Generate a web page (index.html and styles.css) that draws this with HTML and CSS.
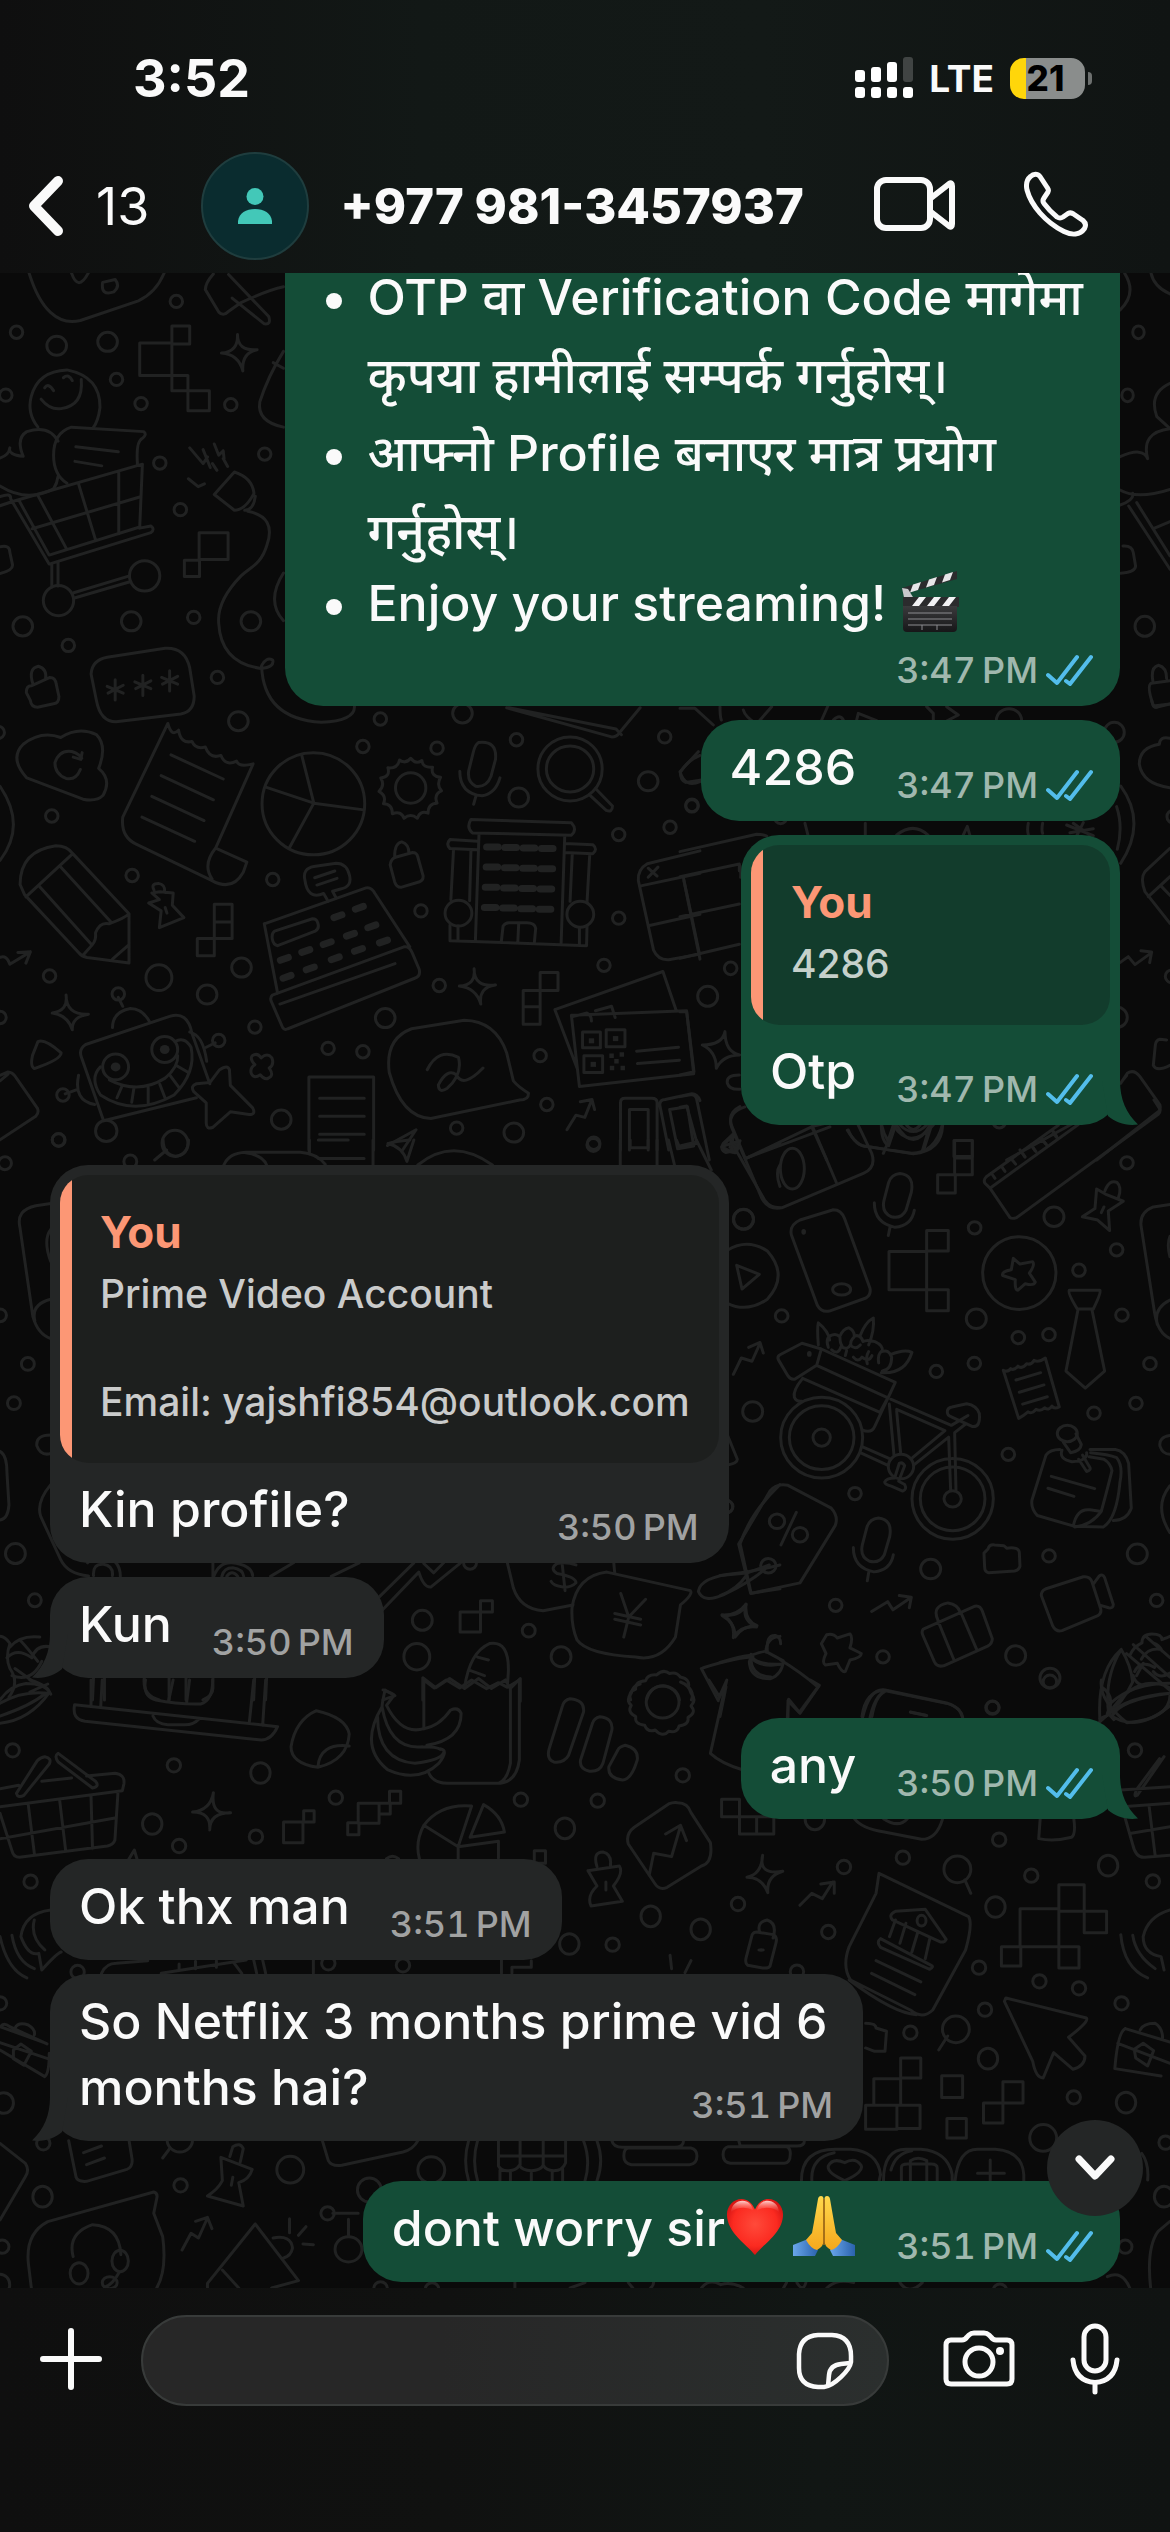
FILE: index.html
```html
<!DOCTYPE html>
<html lang="en">
<head>
<meta charset="utf-8">
<meta name="viewport" content="width=device-width, initial-scale=1">
<title>+977 981-3457937</title>
<link rel="stylesheet" href="styles.css">
</head>
<body>
<svg class="defs" aria-hidden="true">
  <symbol id="ticks" viewBox="0 0 48 32"><path d="M2 21l9 8L31 3M20 27l4 3L45 3" fill="none" stroke="#53bdeb" stroke-width="4" stroke-linecap="round" stroke-linejoin="round"/></symbol>
  <symbol id="tail" viewBox="0 0 36 44"><path d="M18 0C18 18 24 32 36 43.500C24 45 14 42 6 35L0 0z" fill="currentColor"/></symbol>
</svg>

<header class="top">
  <div class="status">
    <span class="clock">3:52</span>
    <div class="status-right">
      <svg class="signal" viewBox="0 0 58 42" aria-hidden="true">
        <g fill="#fff"><rect y="13" width="10" height="12" rx="3"/><rect x="16" y="10" width="10" height="15" rx="3"/><rect x="32" y="5" width="10" height="20" rx="3"/><rect y="30" width="10" height="11" rx="3"/><rect x="16" y="30" width="10" height="11" rx="3"/><rect x="32" y="30" width="10" height="11" rx="3"/><rect x="48" y="30" width="10" height="11" rx="3"/></g>
        <rect x="48" width="10" height="25" rx="3" fill="#404443"/>
      </svg>
      <span class="network">LTE</span>
      <span class="battery"><span class="battery-level">21</span></span>
    </div>
  </div>
  <nav class="bar">
    <button class="back" type="button" aria-label="Back">
      <svg width="36" height="62" viewBox="0 0 36 62" aria-hidden="true"><path d="M30 6L6 31l24 25" fill="none" stroke="#fafafa" stroke-width="10" stroke-linecap="round" stroke-linejoin="round"/></svg>
      <span>13</span>
    </button>
    <span class="avatar"><svg width="34" height="36" viewBox="0 0 34 36" aria-hidden="true" fill="#43c8b8"><circle cx="17" cy="8.500" r="8.500"/><path d="M0 36v-3C1 25 8 21 17 21s16 4 17 12v3z"/></svg></span>
    <h1 class="name">+977 981-3457937</h1>
    <button class="icon" type="button" aria-label="Video call">
      <svg width="82" height="56" viewBox="0 0 82 56" aria-hidden="true" fill="none" stroke="#fafafa" stroke-width="6" stroke-linejoin="round"><rect x="3" y="4" width="53" height="48" rx="9"/><path d="M57 22L75 8q3-2 3 2v38q0 4-3 2L57 36"/></svg>
    </button>
    <button class="icon" type="button" aria-label="Voice call">
      <svg width="66" height="66" viewBox="0 0 66 66" aria-hidden="true" fill="none" stroke="#fafafa" stroke-width="5" stroke-linejoin="round"><path d="M7.500 5.500C10.500 2.500 14.500 2.500 17 5.500L24.500 17q1.500 2 .5 4l-4 6q-2 3 0 5.500C25.500 38.500 29 42 34 46q3 2 6 0l5-3.500q3-1.500 5.500.5l9.500 6.500q4 3.500 1.500 8C57 64 49 64.500 41 60.500C22 51 8 34 4 19Q2 10 7.500 5.500z"/></svg>
    </button>
  </nav>
</header>

<main class="chat">
  <svg class="wallpaper" viewBox="0 273 1170 2015" preserveAspectRatio="xMidYMin slice" aria-hidden="true">
    <g class="wa" transform="translate(0 270) scale(.4464 .5612)">
      <path d="M65 5C90 70 130 100 180 90L310 55Q350 40 368 5M160 5q15 35 38 0M230 22q-5 25 25 17q15-10 3-22z"/>
      <path d="M460 35L490 75q10 8 20 0l30-17q60-22 95-28M460 35q0-12 18-28M512 8l90 75q6 15-10 13L520 50"/>
      <path d="M385 100h40v32h-40zM313 130h72v58h-72zM385 188h36v27h-36zM421 215h48v36h-48zM446 468h65v48h-65zM413 517h34v29h-34z"/>
      <path d="M532 115q0 30 44 27q-35 5-32 38q-10-30-48-32q38-2 36-33z"/>
      <path d="M635 145Q600 190 582 235Q575 270 635 280M612 165l23 10"/>
      <path d="M85 280Q60 255 70 225Q85 180 150 178Q225 190 224 245Q220 270 208 282M92 230q20 20 45 17q50-5 45-52M100 210q8-10 20 5M142 192q12-8 20 5"/>
      <path d="M0 335q20-5 22-18M22 317q-5 12 30 15Q35 300 60 288Q110 275 130 305M0 385Q60 415 120 390q8-10 10-22M150 380Q120 365 120 330Q120 290 160 280L322 288q8 5-3 12q-15 5-11 47M170 315l95 9M168 341l60 8"/>
      <path d="M0 420l30-8L319 346l-6 112L110 508L42 410M0 404q25-8 24 4L110 524L338 468q10-6 0-12l-25 4M85 402l64 95M176 381l38 100M266 360v110M72 461l243-57M116 523v42M130 520v43M165 575l125-30M165 585l128-30"/>
      <ellipse cx="131" cy="589" rx="34" ry="27"/><ellipse cx="324" cy="545" rx="34" ry="27"/>
      <path d="M0 493q22-4 22 10l6 22q2 10-28 16"/>
      <path d="M425 317l30 28l10-12M455 320l16 32M480 310l10 20l10-8l2 14M422 372l22 14l14-5M480 400l45-40q40 10 44 38q-20 30-44 30zM548 428q20 0 24-25M476 345l10 12M500 336l10 14M555 430Q620 440 598 490C585 525 560 530 540 545Q485 590 490 630Q495 700 585 710q30-2 26-15q-15-6-25 10Q590 800 720 806Q795 803 794 778M635 540q-40 50 0 85"/>
      <path d="M70 741l42-15q12 0 14 12l6 22q0 12-12 13l-36 6q-14 0-16-12l-9-14q0-12 11-12zM74 738q-12-28 12-32q20 5 16 23"/>
      <path d="M240 690L370 674q45-2 55 35l10 50q0 28-30 32L260 805q-35 0-44-38L204 720q2-25 36-30zM258 730v36M240 742l36 12M276 740l-34 14M320 722v36M302 734l36 12M338 732l-34 14M380 714v36M362 726l36 12M398 724l-34 14"/>
      <path d="M60 905Q20 870 52 845q40-25 84-12q40-20 80-5q25 20 5 60q30 20 10 48q-15 12-45 7zM180 890q-10 20-32 16q-25-8-25-28q10-24 38-20q18 5 22 12M184 860l-3 12l-17-4"/>
      <path d="M376 808L275 975q-5 35 30 48L475 1088q45 20 70-15l8-18l-70-25q-30 30-8 55M376 808q8 25 24 12q5 25 30 20q8 15 30 10q10 22 35 15q10 20 35 10q5 12 37 5L483 1030M383 864l117 43M361 901l117 43M340 938l117 43M318 975l118 43"/>
      <ellipse cx="702" cy="951" rx="115" ry="91"/><path d="M703 950L676 865M703 950L597 922M703 950l-55 80M703 950l112 12"/>
      <ellipse cx="920" cy="923" rx="34" ry="27"/><path d="M920 870q12 12 25 4q2 14 24 12q-5 16 18 18q-10 14 2 24q-18 6-10 22q-20 0-20 18q-18-6-24 9q-15-10-30 0q-6-14-26-8q0-18-20-18q8-14-10-22q14-10 4-24q22-2 16-18q22 2 26-14q14 8 25-3z"/>
      <path d="M1072 842q42-4 38 30l-10 30q-10 20-34 18q-20-8-16-28l10-32q4-14 12-18zM1030 893q0 40 50 44q30-4 40-32M1066 938l-5 14"/>
      <ellipse cx="1277" cy="889" rx="72" ry="57"/><ellipse cx="1277" cy="889" rx="53" ry="41"/><path d="M1320 935l38 28q14 4 14-8L1334 924"/>
      <path d="M1055 979L1280 985q14 12 0 22L1058 1003q-14-10-3-24zM1073 1005l-8 190M1265 1010l-8 190M1070 1018l-62-3q-10 8 0 16l62 2M1266 1022l62 2q12 8 0 16l-64-2M1016 1032l-6 90M1055 1034l-3 90M1282 1040l-5 85M1321 1042l-6 85M1008 1195l306 9l1-35M1008 1195v-28M1026 1195v-26M1298 1203v-30M1123 1197l4-28q5-6 13-6h40q18 0 20 10l-3 26M1162 1164l-2 33"/>
      <ellipse cx="1027" cy="1146" rx="30" ry="23"/><ellipse cx="1300" cy="1148" rx="30" ry="23"/>
      <path d="M1090 1028h26M1131 1029h26M1172 1030h26M1213 1031h26M1089 1064h26M1130 1065h26M1171 1066h26M1212 1067h26M1087 1100h26M1128 1101h26M1169 1102h26M1210 1103h26M1085 1136h26M1126 1137h26M1167 1138h26M1208 1139h26" stroke-width="7"/>
      <path d="M55 1113L45 1095Q45 1035 125 1026q25 0 38 14L289 1147v88L195 1225q-12-2-18-8zM58 1117L163 1040M88 1098L206 1203M135 1063L250 1163M206 1203l-20 18M206 1203q10-8 8-22q10-20 30-16q35-10 45-18M252 1228l37-26"/>
      <path d="M340 1110l18-2l30 2l-2 22l26 22l-55 18l4-30l-28-14l24-6zM345 1105q-8-12 10-12q16 2 14 16M370 1136l4 10"/>
      <path d="M480 1130h40v32h-40zM480 1162h40v29h-40zM442 1191h38v31h-38zM1210 1252h40v32h-40zM1172 1284h38v29h-38zM1172 1313h38v31h-38z"/>
      <path d="M592 1165l228-64q12-2 20 10L918 1206M592 1165l30 124M610 1292L905 1206q12-2 18 10l16 30q4 12-10 16L645 1352q-10 4-14-6L607 1302q-2-6 3-10zM627 1308L885 1236M735 1125l-10-14q-36 12-42-24q-6-20 20-24l50-6q24 0 30 22q6 20-20 24l-18 4l8 12M705 1083l45-12M710 1096l45-12M615 1178l85-22q10 0 12 8q4 10-6 14l-84 26q-10-2-12-12q-2-10 5-14z"/>
      <path d="M748 1154l18-5M796 1139l18-5M628 1230l18-5M676 1216l18-5M724 1202l18-5M776 1187l18-5M824 1172l18-5M634 1262l18-5M686 1247l18-5M742 1229l18-5M794 1214l18-5M850 1199l18-5" stroke-width="7"/>
      <path d="M1568 1035L1450 1058q-22 10-20 30l34 124q10 18 34 17l70-10M1438 1097l130-22M1532 1088l36 140M1455 1168l113-20M1452 1066l20 14M1474 1064l-22 18"/>
      <path d="M0 1225q15-5 22 12L68 1215M40 1216l28-1l-10 20M148 1292q0 36 50 34q-38 5-36 28q-10-26-45-30q36-4 31-32zM1062 1245q0 34 48 29q-38 4-33 34q-10-28-48-32q38-2 33-31z"/>
      <path d="M192 1380L380 1330q40-10 50 30l40 90M192 1380q-16 8-10 22L232 1516L440 1475M252 1350q0-28 40-34q26 0 42 22M275 1312l-10-16M425 1358q30 5 38 52M462 1385l20-8M176 1435q-12 45 36 52M174 1460l-28 8M85 1375q15-6 52 20q0 12-60 28q-10-4-4-24z"/>
      <ellipse cx="259" cy="1420" rx="29" ry="23"/><ellipse cx="369" cy="1389" rx="29" ry="23"/><ellipse class="fill" cx="259" cy="1420" rx="11" ry="8"/><ellipse class="fill" cx="369" cy="1389" rx="11" ry="8"/><ellipse cx="238" cy="1534" rx="24" ry="19"/>
      <path d="M225 1420Q200 1440 225 1470Q300 1510 390 1470Q440 1430 428 1385q-15-20-36-10M245 1443Q310 1470 370 1440Q400 1420 398 1400M262 1475l12-22M295 1483l5-25M332 1484v-27M370 1476l-12-25M402 1458l-22-24M422 1430l-26-12"/>
      <path d="M492 1425q18-10 22 0l2 28l50 40q8 12-8 12l-42-5l-40 28q-14 4-14-8v-36l-28-20q-8-10 6-14l30-2z"/>
      <path d="M565 1400q12-6 20 4q14-10 24 0q6 12-6 18q12 14-2 18q-8 4-18-6q-14 8-20-2q-4-10 8-16q-12-10-6-16z"/>
      <path d="M692 1568V1438h145V1568M716 1476h100M716 1508h100M716 1540h100M868 1560l64-28l-30 36M1150 1445q10 10 34 22q0 12-20 12L965 1512Q900 1510 872 1430q-10-60 50-78L1040 1337Q1110 1338 1135 1395zM957 1425q25-40 70-22q10 30-25 55q-20 10-20-6q20-30 40-18q15 25 60-12"/>
      <path d="M1243 1318L1485 1250l30 70M1243 1318l50 105M1280 1328l258-8l16 112L1298 1455zM1426 1392l94-7M1428 1414l94-6M1305 1358h40v28h-40zM1358 1354h42v30h-42zM1308 1400h42v30h-42zM1285 1330l30-6q10 4 10 14M1334 1320l36-8l8 20"/>
      <rect class="fill" x="1319" y="1369" width="12" height="9"/><rect class="fill" x="1373" y="1365" width="12" height="9"/><rect class="fill" x="1323" y="1411" width="12" height="9"/><path class="fill" d="M1365 1396h10v8h-10zM1388 1394h10v8h-10zM1376 1406h10v8h-10zM1366 1418h10v8h-10zM1390 1418h10v8h-10z"/>
      <path d="M1270 1532l20-26l20 4l16-32M1300 1482l26-4l6 18M1390 1568V1484q0-8 10-8h60q12 0 12 8v84M1410 1568v-72h42v72M1498 1568l-20-80q0-10 12-10l60-10q12 0 18 12M1500 1496l40-5l14 70l-36 5z"/>
      <path d="M888 1046l36-8q10 0 12 8l12 34q0 8-8 10l-42 10q-10 0-14-10l-10-30q2-12 14-14zM884 1045q0-24 16-26q16 4 16 20M1568 865q-30 10-44 30q0 14 12 18l32-4M0 1435l18-6q10 0 18 10l48 55q4 8-4 14L0 1550M0 1445l18-12M0 920q60 70 0 132M1135 780l235 52q12 0 18-8l46-44M1140 780l240 38l12 10"/>
      <ellipse class="s" cx="395" cy="56"/><ellipse class="s" cx="37" cy="111"/><ellipse class="l" cx="127" cy="135"/><ellipse class="l" cx="241" cy="128"/><ellipse class="s" cx="261" cy="195"/><ellipse class="s" cx="13" cy="223"/><ellipse class="s" cx="316" cy="238"/><ellipse class="s" cx="517" cy="240"/><ellipse class="s" cx="593" cy="328"/><ellipse class="s" cx="358" cy="344"/><ellipse class="s" cx="404" cy="427"/><ellipse class="l" cx="51" cy="635"/><ellipse class="l" cx="294" cy="626"/><ellipse class="s" cx="434" cy="619"/><ellipse class="l" cx="562" cy="626"/><ellipse class="s" cx="153" cy="669"/><ellipse class="s" cx="487" cy="726"/><ellipse class="l" cx="534" cy="804"/><ellipse class="s" cx="116" cy="973"/><ellipse class="s" cx="296" cy="1079"/><ellipse class="s" cx="611" cy="1086"/><ellipse class="s" cx="813" cy="849"/><ellipse class="s" cx="852" cy="800"/><ellipse class="s" cx="979" cy="852"/><ellipse class="l" cx="1036" cy="790"/><ellipse class="s" cx="1157" cy="837"/><ellipse class="l" cx="1162" cy="940"/><ellipse class="s" cx="1489" cy="832"/><ellipse class="l" cx="1452" cy="911"/><ellipse class="s" cx="1386" cy="1006"/><ellipse class="s" cx="1501" cy="993"/><ellipse class="s" cx="1550" cy="955"/><ellipse class="s" cx="1386" cy="1155"/><ellipse class="s" cx="943" cy="1142"/><ellipse class="s" cx="1353" cy="1239"/><ellipse class="s" cx="984" cy="1275"/><ellipse class="s" cx="111" cy="1258"/><ellipse cx="356" cy="1261" rx="29" ry="23"/><ellipse class="l" cx="541" cy="1243"/><ellipse class="l" cx="464" cy="1291"/><ellipse class="s" cx="571" cy="1349"/><ellipse class="l" cx="863" cy="1333"/><ellipse class="s" cx="735" cy="1387"/><ellipse class="s" cx="813" cy="1393"/><ellipse class="s" cx="265" cy="1290"/><ellipse class="s" cx="490" cy="1373"/><ellipse class="s" cx="141" cy="1470"/><ellipse class="l" cx="630" cy="1514"/><ellipse class="s" cx="131" cy="1550"/><ellipse cx="392" cy="1556" rx="29" ry="23"/><ellipse class="s" cx="1210" cy="1400"/><ellipse class="s" cx="1225" cy="1487"/><ellipse class="s" cx="1023" cy="1529"/><ellipse class="l" cx="1151" cy="1537"/><ellipse class="s" cx="1330" cy="1556"/><ellipse class="s" cx="0" cy="1332"/><ellipse class="s" cx="-4" cy="824"/>
    </g>
    <g class="wg" transform="translate(270 260) scale(.574 .3333)">
      <path d="M1481 150q30-50 8-110M1535 40q5 40 33 62M1568 370Q1530 400 1545 470l23 36M1481 590q40-30 48 6q-12-80 39-90M1481 690q30 30 87-2M1481 735q25-15 22-35M1496 738l72 190M1510 728l58 160M1540 805l28-20M1486 858q16-2 18 20l4 40q0 18-26 22M1535 1270l33-8M1535 1270q-8 8 4 68l29-6M1538 1262q-4-40 10-46q14 6 14 40"/>
      <ellipse cx="1513" cy="217" rx="10" ry="19"/><ellipse cx="1494" cy="406" rx="10" ry="19"/><ellipse cx="1524" cy="1099" rx="17" ry="30"/>
    </g>
    <g class="wf" transform="translate(680 700) scale(.3333)">
      <path d="M0 25h45l55 50M0 215q15 50 60 30M0 215l55-60M120 20q0 30 4 40M190 30q5 20 40 42l45-52M425 60l20-45M460 60q20-20 30 0M530 60l5-20l55 22M740 20l20 20v20M800 20l35 25l-35 18M1415 0q5 30 20 20l35-8M1470 115q-30-8-32 18q-60 10-60 60q10 60 92 70M0 455l230-52q20 0 30 5M0 530l178-38v20M0 650l178-38M0 775l178-42M10 532l48 228M178 492q6 20 4 40M375 370l10 40M556 370v36M650 405q50-40 94 0M850 405l12-26l8 28M1045 370q-4 20 0 34M1088 370q-4 20 0 30M1322 258q80 110 0 232M1310 320q20 60 2 128M1160 375l80 32M1170 398l70-12M1180 370l50 36M1210 368l-20 40M1470 445l-75 70q-15 20 0 60l75 95M1405 590l65-60M1445 560l25 26M1320 788l25-18l20 24l50-36M1383 752l32 4l-6 32M0 935h20l22 180l-42 10M135 995q0 60 44 70q-50 0-70 40q0-50-42-70q60 0 68-40zM178 1125q-40 0-36 25q6 20 38 18M0 1190l35-6q12 0 15 14l38 182M0 1222l20-4l30 108l-50 12M180 1220q-40 20-24 60l40 95M130 1330l30-28l-10 40l24-16q-10 30-36 32q-20-8-8-28zM198 1375l200-96l170-40M395 1280l45 100M505 1290q20 50 60 50l130 20q70 0 92-85M605 1275q5 25 20 50l-15 35M640 1275l-20 60M750 1275l-22 75M660 1275q40 40 80 0M640 1275q50 80 120 0M1322 1150l20-30q20-14 38 10l60 85q4 18-10 24L1250 1380M980 1380l200-110M1460 1020l-20-2q-12 2-14 18l-6 60q10 20 50 0M822 1322h55v48h-55zM1325 1145l15-18M1020 1350l15 20M1053 1335l15 20M1086 1318l15 18M1119 1300l14 16"/>
      <ellipse class="s" cx="36" cy="316"/><ellipse class="s" cx="152" cy="805"/><ellipse class="l" cx="83" cy="889"/><ellipse cx="987" cy="62" rx="38" ry="36"/><ellipse class="l" cx="1303" cy="97"/><ellipse class="l" cx="1312" cy="952"/><ellipse class="s" cx="1475" cy="829"/><ellipse class="s" cx="1480" cy="350"/><ellipse class="s" cx="302" cy="352"/><ellipse class="s" cx="958" cy="1265"/>
    </g>
    <g class="wb" transform="translate(720 1100) scale(.3333 .4082)">
      <path d="M75 17q-55 15-40 50L125 240q20 30 60 24L430 180q40-14 25-50L415 62M80 142L330 66M278 66L350 204M5 115l35-30l-6 40l20-8q-4 16-24 8zM382 74q30 40 60 40L580 132Q665 125 668 62M484 62q0 40 22 50l20-48M530 62q50 70 100 0M560 62q20 20 40 0M612 120l22-56M650 62"/>
      <ellipse cx="217" cy="168" rx="36" ry="50"/>
      <path d="M540 180q44 4 34 46l-16 44q-14 22-44 16q-30-10-22-40l14-44q8-20 34-22zM463 252q0 50 62 60q50-4 58-42M510 312l-5 20M475 1024q44 4 34 46l-16 44q-14 22-44 16q-30-10-22-40l14-44q8-20 34-22zM400 1096q0 50 62 60q50-4 58-42M446 1158l-4 20"/>
      <path d="M704 99h53v43h-53zM704 142h53v41h-53zM653 183h53v45h-53zM620 320h65v50h-65zM507 371h113v94H507zM620 465h65v51h-65z"/>
      <path d="M1075 60L810 216l-15-12q-6-8 4-16L1015 62M810 216l60 72q6 4 20 0L1315 35q8-6 4-14L1302 0M815 180l10 12M845 163l10 12M875 145l12 12M905 128l10 12M935 112l10 12M965 95l12 12M1000 77l10 12"/>
      <path d="M1130 218l30 14l50 16l-45 24l4 48l-36-26l-46-8l38-20zM1155 222q14-28 36-20q16 12 4 38M1152 262l-8 14"/>
      <ellipse cx="898" cy="424" rx="110" ry="89"/><path d="M880 388l20 14l38-6q8 8-10 28l18 22q-4 10-30 4l-22 16q-10 0-8-26l-38-10q-4-10 26-14z"/>
      <path d="M240 294L340 269q24 0 34 22l76 170q4 16-12 24l-110 32q-24 4-36-14L214 330q-6-24 26-36z"/><ellipse cx="365" cy="464" rx="27" ry="14"/><circle class="fill" cx="251" cy="323" r="7"/>
      <path d="M22 368q60-30 120 2q65 60 0 118q-60 34-120 10M50 405l68 22l-52 36zM40 672l24-40l32 8l24-44M86 606l34-12l10 26"/>
      <path d="M1048 466h92q4 6-20 46h-48q-30-40-24-46zM1074 514l-36 150l58 42l58-42l-38-150"/>
      <path d="M850 662q14 6 22-4q10 6 22-6q14 8 26-6q14 4 22-8q14 6 34-6l42 120q-16 6-22-2q-10 12-22 4q-12 10-26 4q-12 12-24 6q-14 10-28 16zM888 686l74-18M898 716l74-18M908 745l74-18"/>
      <path d="M175 636q-4-8 5-12l66-28l58 14l-14 40l-66 34q-12 2-20-8zM304 610l222 82l-22 38L290 650M248 682q-30 30-25 46q6 12 22 10M248 682L480 765l24-36M504 730l-40 70q-10 18-38 8"/><circle class="fill" cx="268" cy="622" r="7"/>
      <path d="M295 600q-4-40 0-54q30 20 34 42M420 578q16-34 40-44q4 30-14 66M512 624q40-14 64-6q-20 54-92 50M325 606q-10-24 10-30q16-4 24 4q10-20 28-22q16 6 16 20q20-4 26 14q10-6 36 0q26 10 22 24q20-6 28 14q0 30-28 34M335 612q20 14 28-8q20 10 28-4q14 14 30 0M400 630q14 14 26 0q20 14 30-4M380 614l-4 12M360 582q0 14 6 20M403 580q-14 10-10 22M446 616q-10 14-4 30M484 616q-12 8-8 28"/>
      <ellipse cx="305" cy="827" rx="123" ry="99"/><ellipse cx="305" cy="827" rx="97" ry="78"/><ellipse cx="305" cy="827" rx="26" ry="21"/><ellipse cx="698" cy="977" rx="122" ry="99"/><ellipse cx="698" cy="977" rx="97" ry="78"/><ellipse cx="698" cy="977" rx="26" ry="20"/>
      <path d="M512 733l182 64l50-24M508 745l14 125M530 762l12 104M530 758l145 52L575 878M582 894L686 826l6 130M708 955l-4-140l34-22M428 850l84 30M424 865l80 30M682 764q0-10 14-12l44-8q30 4 38 24q4 34-20 32L694 776q-12-2-12-12z"/>
      <ellipse cx="543" cy="898" rx="38" ry="30"/><path d="M538 890l-14 36q-24 0-30 10q0 6 20 10l34 12q14-4 6-16l-18-8l18-38q-6-10-16-6z"/>
      <path d="M150 958q20-20 54-14l130 56q22 20 12 42L240 1183L92 1209L56 1088zM183 1090l46-80M0 1165l80-6l68-20M0 1214q50-14 80-50"/><ellipse cx="171" cy="1032" rx="23" ry="18"/><ellipse cx="240" cy="1065" rx="23" ry="18"/><ellipse cx="145" cy="1141" rx="23" ry="18"/>
      <path d="M1020 856q-30 0-42 14L936 980q-4 20 16 38l110 26L1150 1046q40-20 50-110q10-40-10-60q-24-8-78-12M1060 1044q10-44 50-40l34 4q20-60 32-100q-4-18-24-28l-44-6M1180 1030q40 0 54-30L1226 890q-10-30-40-34h-76M1144 1008q-30 34-80 38M994 922l130 30M984 951l78 20M1100 864q4 20-44 22q-40-6-30-28M1076 880l24 30q16-4 8-12l-20-28"/><ellipse cx="1042" cy="817" rx="30" ry="20"/><path d="M1030 838l22 26q30-4 32-20l-16-26"/>
      <path d="M1350 256l-50 6q-44 14-36 50l40 210q10 50 46 62M1350 490q-50 20-38 60M1350 334q-10 20 0 50M1350 945q-50 50 0 115M1350 822q-34 4-30 26q8 20 30 20"/>
      <path d="M792 1110l12-10q4-12 20-10l28 2l8 6q36-4 38 10l2 34q-4 10-16 12l-78 4q-12-2-12-14zM455 1253l48-24l16 20l54-30M538 1214l36 4l-6 26M610 1296L765 1240q16-2 22 12l30 68q0 12-14 18l-132 48q-20 4-28-10L608 1310q-4-8 2-14zM654 1276l48 96M722 1254l48 92M654 1274q-20-34 30-42q30 4 36 22M964 1214q0-12 12-16L1090 1168q20-2 26 12l26 66q4 12-10 18L1026 1300q-18 4-28-12zM1120 1186l18-20q10-6 16 4l26 66q0 10-14 8l-24-6"/>
      <path d="M78 1235q-14 40 32 56q-50-4-70 26q6-40-34-56q56 6 72-26zM320 1310q20-4 32 8l38-10q10 8 0 34l34 14q0 10-34 16l-14 28q-10 4-24-20l-36 4q-12-6 2-28l-14-24z"/>
      <path d="M0 1378q60-16 95-18M182 1372q60 30 112 66l-56 62l-32-32l-4 44M0 1510l18-72M95 1360q40-12 45-8l50 22q-4 34-40 44q-60 0-62-42zM90 1364q30 28 94 18M142 1350q-4-40 24-38q16 4 16 20M426 1510q10-60 64-64L690 1480q34 12 38 32M456 1510q10-50 40-62M572 1500l48 8"/>
      <path d="M22 820l30 60q0 10-30 14M1140 1520q-10-120 64-174q30 40 34 80q-30 50-72 78q-14-90 38-158M1166 1504q80 50 184-20M1350 1440q-100-40-184 64l-30 22M1166 1504l16 14M1220 1356l130 90M1240 1334l110 80M1280 1316l70 50M1230 1360q10-20 36-30q0-22 30-22q30 0 30 14q20-6 24-8M1264 1370q20-30 60-24M1244 1400q20-30 60-10M1300 1330q20 6 26 20M1240 1410q10 30 50 20M1300 1400q20 20 50 4M1270 1380l-20 30"/>
      <ellipse class="s" cx="1221" cy="154"/><ellipse class="l" cx="70" cy="292"/><ellipse class="l" cx="1002" cy="286"/><ellipse class="s" cx="764" cy="313"/><ellipse class="s" cx="1190" cy="367"/><ellipse class="s" cx="1077" cy="417"/><ellipse class="s" cx="185" cy="529"/><ellipse class="l" cx="769" cy="536"/><ellipse class="s" cx="1206" cy="527"/><ellipse class="s" cx="895" cy="582"/><ellipse class="s" cx="987" cy="575"/><ellipse class="s" cx="763" cy="645"/><ellipse class="s" cx="649" cy="665"/><ellipse class="s" cx="1290" cy="646"/><ellipse class="s" cx="1248" cy="743"/><ellipse class="s" cx="1122" cy="767"/><ellipse class="l" cx="98" cy="763"/><ellipse class="s" cx="865" cy="868"/><ellipse class="s" cx="405" cy="964"/><ellipse class="s" cx="20" cy="996"/><ellipse class="s" cx="987" cy="1117"/><ellipse class="l" cx="1252" cy="1112"/><ellipse class="l" cx="632" cy="1149"/><ellipse class="s" cx="347" cy="1238"/><ellipse class="s" cx="1310" cy="1226"/><ellipse class="s" cx="489" cy="1364"/><ellipse class="l" cx="887" cy="1361"/><ellipse class="l" cx="990" cy="1416"/><ellipse class="s" cx="818" cy="1488"/>
    </g>
    <g class="wc" transform="translate(0 1140) scale(.4974 .3571)">
      <path d="M328 0q0 40 25 46q26-4 26-46M335 28l-24 28M450 70q10-34 44-36h110q34 4 50 34M494 36q34 6 42 34M622 0v40M750 0v70M640 52h92M640 0h60M780 10q14-6 44-10M780 10q30 10 38 50l14-60M840 70q70-80 150 0M1247 0v70M1321 0v70M1267 0v22h36V0M1344 0l12 70M1400 0l30 84M1360 0l6 20l34-10V0M1452 18l36-16l-10 34q-20-4-26-18zM1468 0l70 170q10 20 30 20M1502 50l66-40M1568 70q-10 20 0 60"/>
      <path d="M102 178l-30 6q-40 12-32 60l26 250q10 50 36 62M102 250q-16 30 0 90M102 446q-40 14-32 60M102 826q-30 0-28 30q8 30 28 22M0 872q14 10 14 60l4 90q-2 40-18 42M102 965q-30 50-20 90l40 120q14 40 56 46M176 1184q10-20 30-20q36 10 36 58M188 1220q-2-34 20-32q20 4 18 32M428 1184v38M430 1222q10-40 36-38q40 6 42 36M446 1222q4-24 22-24q20 4 22 24M456 1222q10-20 22 0M544 1222l46-38M666 1222l56-38M762 1280l70-96M762 1326l80-116q10 44 24 42l60-68M852 1186l20 26l20-28M1020 1184l12 70q14 60 60 64l60-16M1234 1184l2 30"/>
      <path d="M1158 1190q-20-10-38-4q-16 14 0 28q38 10 38 26q-10 14-26 12q-20-4-24-16M1130 1184l6 78M1150 1310q10-90 70-100L1388 1262q6 10-20 40l-10 90q-30 70-80 56Q1180 1440 1160 1400Q1148 1360 1150 1310zM1248 1270l16 66l-10 56M1264 1336l34-50M1236 1326l52 16M1236 1342l52 16M1568 965q-60 80-80 166l22 138l58-12M1568 1190q-60 20-90 24q-70 10-74 50q10 34 50 10q60-40 90-80"/>
      <path d="M966 1290h24v32h-24zM925 1322h41v56h-41zM1500 1300q-4 44 22 60q-30 0-44 32q0-40-26-60q30 0 48-32zM934 1534q10-100 50-124q40-10 38 80l-2 40M960 1448l22 8M946 1486l28 14M850 1568v-62l26 28l28-26l30 28l28-28l26 28l28-24l10 24l20-28v64M1268 1568q-6-24 10-30q-2-22 20-24q4-18 22-16q14-18 26-4q14-6 22 10q20 6 16 28q12 16 6 36M1300 1568q8-40 34-40q28 6 32 40M1410 1480l34 90M1414 1478q70-30 100-30M1444 1568l14-40M1510 1440q-4 60 40 64M1512 1450q16 20 56 18M1540 1434q0-40 28-44M186 1568l2-62M210 1568v-62M510 1568l2-62M534 1568l2-62M290 1506q-4 50 30 62M340 1568v-62M374 1568v-62M428 1506v30q0 20-20 32M770 1540q20 10 24 16l-24 12"/>
      <path d="M0 1390q10 0 20 20q-10 40 0 70q20 40-2 80M0 1568q20-40 52-46q40 0 50 30M20 1420q20-34 60-28M14 1450q20-30 50 0q10-40 40-30M24 1500q40 20 60-40M40 1400q14 20 36 60M30 1480l40 40"/>
      <ellipse class="s" cx="10" cy="65"/><ellipse class="s" cx="118" cy="0"/><ellipse class="s" cx="262" cy="60"/><ellipse class="s" cx="1193" cy="14"/><ellipse class="l" cx="1495" cy="222"/><ellipse class="s" cx="56" cy="627"/><ellipse class="s" cx="28" cy="737"/><ellipse class="l" cx="31" cy="1158"/><ellipse class="s" cx="70" cy="1289"/><ellipse class="s" cx="0" cy="491"/><ellipse class="s" cx="1460" cy="1027"/><ellipse class="l" cx="849" cy="1345"/><ellipse class="s" cx="1063" cy="1374"/><ellipse cx="838" cy="1447" rx="26" ry="37"/><ellipse class="l" cx="1128" cy="1447"/><ellipse class="s" cx="945" cy="1184"/>
    </g>
    <g class="wd" transform="translate(0 1680) scale(.7462 .3333)">
      <path d="M122 0v76M137 0l-2 80M340 0l-6 130M356 0l-4 136M100 74q-4 44 14 50L350 180q14 0 22-40L100 74zM205 108q4 24 20 26h20q14 2 22-18M195 0q-4 50 14 60q30 14 60 12q16-10 16-72M232 0l-6 62M254 0l-4 70"/>
      <path d="M424 92q40 20 44 70Q466 240 426 262Q390 250 390 200Q396 120 424 92zM468 198q-40-10-42 64"/>
      <path d="M568 0v146M568 0l14 24l16-24l18 24l16-24l20 26l16-18l12 14l16-22v240q-4 70-30 70h-66q-20 0-26-34M684 20v230q-4 50-16 60"/>
      <path d="M516 30l12 16l-10 30q20 90 50 70q20-6 36-56q10-10 14 10q0 80-46 96M516 30q-4 40-4 50Q480 200 520 270q40 40 68-20q14-40 2-44M512 80q10 130 54 120M506 110q0 130 50 140q34-10 38-30M566 200q20 0 24 8"/>
      <path d="M764 56q20 4 18 40l-20 130q-6 24-20 20q-10-10-6-40l18-130q2-16 10-20zM804 110q18 4 16 40l-12 100q-4 26-18 24q-14-8-12-34l16-110q2-16 10-20zM838 196q18 10 16 44q-8 60-20 60q-20-6-18-40l12-50q2-10 10-14z"/>
      <ellipse cx="888" cy="66" rx="22" ry="48"/><path d="M846 40q-8 20 0 36q-6 20 6 34q-2 22 12 26q4 22 14 14q10 24 18 4q12 6 14-16q14-4 12-26q12-14 4-34q8-18 0-38M846 40q2-24 12-28M926 40q-2-24-14-34"/>
      <path d="M950 0l14 50l10-50v0l-22 220q14 30 44 50M1086 0l12 16l-26 84l-16-38v50M1156 112q10-90 30-82l84 40q16 10 20 42M1166 112q6-60 18-76M1220 96l20 10M1476 0q-4 60 34 128q60-10 58-90M1484 106Q1510 50 1568 40M1484 106l-10 10M1490 110q10-50 78-70M1476 20q20 30 8 80M1568 10q-50 0-80 60"/>
      <path d="M0 130q40-10 66-92q0-20-26-38M0 108q40-30 60-66M0 70q30-40 66-30M40 36L64 12"/>
      <path d="M60 230q10 4 6 22L32 346q-8 10-10-6l28-98q4-10 10-12zM78 220l50 84q6 16-4 20L78 246q-6-18 0-26zM0 326l25-10M56 304l40-10M116 288l38-8q14 4 12 32l-2 20L0 380M158 340l-4 140q-2 14-10 18L26 532q-8 0-10-20L0 400M38 376l8 144M80 362l8 150M122 350l2 156M0 476l154-62M1568 320l-66 10M1560 230l-36 116q-6 8 0-20l30-90M1568 370l-64 10M1504 384l14 110q4 40 16 38l34-6M1540 380l8 146M1516 460l52-20"/>
      <path d="M286 338q-4 70 23 60q-28 0-28 52q2-54-23-54q24-6 28-58zM1022 526q-6 60 27 48q-22 14-20 64q-8-46-28-46q20-10 21-66z"/>
      <path d="M407 392h14v34h-14zM380 426h26v62h-26zM522 334h15v36h-15zM508 370h15v32h-15zM480 370h28v60h-28zM466 428h15v36h-15zM967 358h24v52h-24zM991 410h23v52h-23zM1014 410h23v52h-23zM716 512h15v38h-15zM1419 614h34v80h-34zM1453 694h30v64h-30zM1367 686h52v114h-52zM1342 800h26v58h-26zM1419 800h27v64h-27zM1207 1134h27v60h-27zM1262 1187h28v66h-28zM1171 1196h36v80h-36zM1160 1276h42v72h-42zM1202 1276h31v70h-31zM1344 1205h27v64h-27zM1318 1269h26v60h-26zM1269 1316h26v58h-26z"/>
      <path d="M614 500L568 436Q590 370 632 378L614 500L668 484v50M562 536q-6-50 6-100M614 500v36M648 374q24 30 28 82l-46 16zM908 368q14 0 18 30l26 90q4 60-12 70l-46 64q-10 10-16-10l-36-120q-4-30 8-50l46-70q6-6 12-4zM870 586l6-66l24 10l12-92M892 462l20-26l8 46M800 560q-6-44 8-44q12 6 10 40M788 572l42-14q6 20-8 60l12 46l-42 14q-6-30 8-60zM812 606v24M1072 676l16-36l14 16l14-50M1100 612l18-6v34M1178 580l120 130q6 20-4 100l-44 180q-14 30-30 0l-80-90Q1128 860 1138 800L1174 640zM1200 694l40-6l28 90q-2 10-8 8L1196 720q-6-16 4-26zM1180 776l68 80q4 4-2 12L1180 802q-6-16 0-26zM1200 720l-8 50M1214 730l-8 60M1230 756l-8 60M1246 776l-6 60M1174 842l60 64M1168 880l58 64M1018 756q-4-30 10-36q14 10 8 54M1014 756l22 8q6 6 4 24l-8 70q-2 8-10 6l-20-8q-4-6-2-24l8-68q2-8 6-8zM1293 600l8 40M1138 900q60 100 90 104"/>
      <ellipse cx="1235" cy="722" rx="6" ry="16"/><circle class="fill" cx="1020" cy="810" r="5"/>
      <path d="M1145 416q10 30 40 40l50 22q20 0 28-60M1184 416q20 30 32 0M1394 416l-2 60q20 10 44-4q6-10 3-56M898 826l2 40M926 842l-8 36M1348 954l108 60q4 10-24 58l22 56q0 30-16 40l-26-50l-14 76q-10 0-14-50l-38-180zM1270 1068l-12 42M68 690q-36 10-40 80q10 60 24 50l4 50q20-50 26-54M0 770q10 100 36 124M16 766q6 80 30 100M46 720q-6 50 14 90M1568 690q-30 20-36 80q0 50 24 60l4 40M1502 764q4 100 36 130M1518 766q4 60 30 100M136 880q6-30 20-30l42-8M216 880l114-40M240 870v-18M262 866v-22M290 862v-20M314 850l10 30M340 840l4 40M352 840l4 40M420 840v40M672 840v40M686 880v-18h26v-20M1160 1030q14 0 14 14l14 10l-2 60h-14l-12-10M0 1040l62 50M1 1040q4-14 12 0l50 52M20 1045q4-20 18-10q10 14 8 30M0 1110l60 80q6-10 6-70M0 1088l64 48M18 1110l10-18l14 22l-10 42l-14-20zM1508 1046q-10 10-14 120l62 22M1508 1046l60 40M1498 1090l70 60M1528 1050q4-20 20-20q10 14 10 44M1520 1108l12-18l14 22l-8 46l-16-24zM172 540l8-30l4 30M518 536q8-14 16 0"/>
      <ellipse cx="1283" cy="568" rx="18" ry="40"/><ellipse cx="1281" cy="1048" rx="18" ry="40"/><ellipse cx="1398" cy="1374" rx="18" ry="40"/>
      <ellipse class="s" cx="17" cy="211"/><ellipse class="s" cx="233" cy="256"/><ellipse class="l" cx="349" cy="279"/><ellipse class="s" cx="450" cy="353"/><ellipse class="l" cx="204" cy="432"/><ellipse class="s" cx="240" cy="498"/><ellipse class="s" cx="343" cy="470"/><ellipse class="s" cx="698" cy="359"/><ellipse class="s" cx="801" cy="362"/><ellipse class="l" cx="757" cy="445"/><ellipse class="s" cx="915" cy="286"/><ellipse class="s" cx="1330" cy="83"/><ellipse class="s" cx="1521" cy="211"/><ellipse class="l" cx="1092" cy="418"/><ellipse class="s" cx="1339" cy="479"/><ellipse class="s" cx="1210" cy="533"/><ellipse class="s" cx="1131" cy="561"/><ellipse class="s" cx="1382" cy="587"/><ellipse class="l" cx="1485" cy="557"/><ellipse class="s" cx="1545" cy="604"/><ellipse class="s" cx="41" cy="605"/><ellipse class="s" cx="989" cy="672"/><ellipse class="l" cx="872" cy="709"/><ellipse class="l" cx="939" cy="748"/><ellipse class="s" cx="1110" cy="756"/><ellipse class="l" cx="1334" cy="681"/><ellipse class="l" cx="763" cy="792"/><ellipse class="s" cx="821" cy="794"/><ellipse class="s" cx="1312" cy="863"/><ellipse class="s" cx="1393" cy="904"/><ellipse class="s" cx="1446" cy="925"/><ellipse class="s" cx="1503" cy="970"/><ellipse class="s" cx="1320" cy="989"/><ellipse class="s" cx="1220" cy="1058"/><ellipse class="l" cx="1324" cy="1136"/><ellipse class="s" cx="1439" cy="1252"/><ellipse class="l" cx="1509" cy="1268"/><ellipse class="l" cx="5" cy="1269"/><ellipse class="s" cx="1562" cy="1388"/><ellipse class="s" cx="1068" cy="875"/><ellipse class="s" cx="440" cy="850"/><ellipse class="s" cx="540" cy="856"/><ellipse class="s" cx="104" cy="876"/><ellipse class="s" cx="0" cy="970"/><ellipse class="s" cx="1407" cy="5"/>
    </g>
    <g class="we" transform="translate(0 2120) scale(.7462 .3333)">
      <path d="M0 70l34 60q6 20 0 40L0 300M92 62l10 110q2 14 14 12l54-36q8-6 7-30l-4-56M112 98l24-20M116 134l24-20M218 114l10-30M308 110l4-30q10-14 14 6l-4 40M296 112l42 36q-4 30-18 40l6 70l-48-30q14-20 20-46zM310 196l2-24M432 62l8 60q4 18 18 14L540 96q14-8 20-34M628 62q-8 60 0 120M640 62q-8 60 0 120M782 62q10 60 2 120M800 62q10 60 0 120M668 62v76q4 16 14 14q10 0 14-16q4 16 16 16t16-16q4 16 14 16q12 0 16-24V62M668 108h88M697 62v74M728 62v74M670 150v32M684 152v30M740 152v30M754 146v36M712 154v28M820 62q2 20 14 20h70q12 0 12-20M842 84h84q8 4 8 24q0 24-10 26h-78q-10-4-10-26q0-22 6-24zM990 62l2 16h76q10 0 10-16M976 80h78q6 6 5 24q0 24-8 26h-72q-10-4-10-26q0-20 7-24zM1074 182q0-94 46-94h20q36 6 40 76l-2 20M1088 182q-2-70 30-84M1184 182q0-94 30-94h20q36 6 42 76v20M1194 150q6-50 28-58M1280 182q4-94 30-94h24q36 6 38 76v20M1132 182q-24-24-22-44q6-26 22-10q14-18 22 8q4 20-22 46zM1208 182v-40q0-10 8-10h32q8 0 8 12v38M1220 182v-60q10-14 22 0v60M1327 120v80M1310 160h36M1530 100q10 30 8 80M1542 504q-6-120 10-170l16-30"/>
      <path d="M206 216L64 305Q34 340 38 430l4 74M206 216q6 4 4 20l-4 44l12 70q6 100-8 154M98 410Q90 340 124 314q36 4 38 90M160 456q-10 40-20 46"/><ellipse cx="106" cy="460" rx="12" ry="32"/><ellipse cx="161" cy="423" rx="11" ry="32"/><ellipse cx="147" cy="488" rx="10" ry="18"/>
      <path d="M244 390l12-50l10 14l12-60M262 304l16-12l6 34M342 312l58 170l-36 22M342 312L278 490v14M298 450l22 54M366 354q24-10 26 30q-2 24-12 30M388 296v42M400 346l10-26M406 372l14 2M446 280h34M467 298v50"/><ellipse cx="467" cy="388" rx="18" ry="38"/>
      <path d="M690 504v-18M784 488l-20 16M842 488l6 16M872 504q4-8 4-18M940 504q10-30 26-10q14-10 30 10M1050 504l4-16M1068 488q8 30 12 0M1108 504q14-30 36-16M1206 488q12 40 30 0M1484 470q20-20 30 34"/>
      <ellipse class="s" cx="58" cy="70"/><ellipse class="l" cx="57" cy="230"/><ellipse cx="241" cy="60" rx="17" ry="36"/><ellipse class="s" cx="242" cy="196"/><ellipse cx="389" cy="149" rx="18" ry="40"/><ellipse cx="578" cy="150" rx="18" ry="40"/><ellipse cx="495" cy="210" rx="16" ry="36"/><ellipse class="s" cx="439" cy="280"/><ellipse class="s" cx="3" cy="380"/><ellipse class="l" cx="0" cy="494"/><ellipse class="s" cx="510" cy="505"/><ellipse class="s" cx="579" cy="508"/><ellipse class="l" cx="1560" cy="230"/><ellipse class="s" cx="1508" cy="380"/><ellipse class="s" cx="1340" cy="512"/>
    </g>
  </svg>

  <ol class="messages">
    <li class="bubble out continued">
      <ul class="text tips">
        <li>OTP वा Verification Code मागेमा कृपया हामीलाई सम्पर्क गर्नुहोस्।</li>
        <li>आफ्नो Profile बनाएर मात्र प्रयोग गर्नुहोस्।</li>
        <li class="latin">Enjoy your streaming! <svg class="emoji clapper" viewBox="0 0 60 62" role="img" aria-label="clapper board">
          <defs><linearGradient id="slate" x2="0" y2="1"><stop stop-color="#3a3a3c"/><stop offset="1" stop-color="#161618"/></linearGradient></defs>
          <path d="M2 18L57 1v8L4 24z" fill="#2b2b2d"/><path d="M13 14.500l8-2.500-3 8-8 2.500zM29 9.500l8-2.500-3 8-8 2.500zM45 4.500l8-2.500-3 8-8 2.500z" fill="#e6e6e8"/>
          <path d="M2 18l6 1 8 13H5z" fill="#c9c9cc"/><circle cx="7" cy="29" r="2" fill="#777"/>
          <path d="M3 27h56v10H3z" fill="#2b2b2d"/><path d="M19 27h7l-7 9h-7zM34 27h7l-7 9h-7zM49 27h7l-7 9h-7z" fill="#f2f2f4"/>
          <path d="M3 36h54v22q0 4-4 4H7q-4 0-4-4z" fill="url(#slate)"/><path d="M8 43h44M8 49h44M8 55h44M22 55v5M37 55v5" stroke="#8c8c90" stroke-width="1"/>
        </svg></li>
      </ul>
      <span class="meta"><time>3:47&#8239;PM</time><svg class="ticks" role="img" aria-label="Read"><use href="#ticks"/></svg></span>
    </li>
    <li class="bubble out">
      <p class="text">4286</p>
      <span class="meta"><time>3:47&#8239;PM</time><svg class="ticks" role="img" aria-label="Read"><use href="#ticks"/></svg></span>
    </li>
    <li class="bubble out last quoted">
      <blockquote class="quote"><b>You</b><p>4286</p></blockquote>
      <div class="line">
        <p class="text">Otp</p>
        <span class="meta"><time>3:47&#8239;PM</time><svg class="ticks" role="img" aria-label="Read"><use href="#ticks"/></svg></span>
      </div>
      <svg class="tail" aria-hidden="true"><use href="#tail"/></svg>
    </li>
    <li class="bubble in quoted">
      <blockquote class="quote"><b>You</b><p>Prime Video Account</p><p class="after-blank">Email: yajshfi854@outlook.com</p></blockquote>
      <div class="line">
        <p class="text">Kin profile?</p>
        <span class="meta"><time>3:50&#8239;PM</time></span>
      </div>
    </li>
    <li class="bubble in last">
      <p class="text">Kun</p>
      <span class="meta"><time>3:50&#8239;PM</time></span>
      <svg class="tail" aria-hidden="true"><use href="#tail"/></svg>
    </li>
    <li class="bubble out last">
      <p class="text">any</p>
      <span class="meta"><time>3:50&#8239;PM</time><svg class="ticks" role="img" aria-label="Read"><use href="#ticks"/></svg></span>
      <svg class="tail" aria-hidden="true"><use href="#tail"/></svg>
    </li>
    <li class="bubble in">
      <p class="text">Ok thx man</p>
      <span class="meta"><time>3:51&#8239;PM</time></span>
    </li>
    <li class="bubble in last long">
      <p class="text">So Netflix 3 months prime vid 6 months hai?</p>
      <span class="meta"><time>3:51&#8239;PM</time></span>
      <svg class="tail" aria-hidden="true"><use href="#tail"/></svg>
    </li>
    <li class="bubble out">
      <p class="text">dont worry sir<svg class="emoji" viewBox="0 0 62 60" role="img" aria-label="red heart">
          <defs><radialGradient id="heart" cx=".5" cy=".45" r=".6"><stop stop-color="#ff4a3a"/><stop offset=".65" stop-color="#fb2a20"/><stop offset="1" stop-color="#c80f10"/></radialGradient><linearGradient id="gloss" x2="0" y2="1"><stop stop-color="#ffe3e0" stop-opacity=".9"/><stop offset="1" stop-color="#ff6a60" stop-opacity="0"/></linearGradient></defs>
          <path d="M31 59C23 48 2 36 2 17C2 8 9 1 17 1c6 0 11 4 14 11C34 5 39 1 45 1c8 0 15 7 15 16C60 36 39 48 31 59z" fill="url(#heart)"/>
          <path d="M6 15C7 7 12 3 18 3s10 4 11 10C23 9 12 9 6 15zM56 15C55 7 50 3 44 3s-10 4-11 10C39 9 50 9 56 15z" fill="url(#gloss)"/>
        </svg><svg class="emoji hands" viewBox="0 0 64 62" role="img" aria-label="folded hands">
          <defs><linearGradient id="hand" x2="0" y2="1"><stop stop-color="#ffd84d"/><stop offset="1" stop-color="#f5a81c"/></linearGradient><linearGradient id="sleeve" x2="1"><stop stop-color="#6aa6ea"/><stop offset="1" stop-color="#2a62ad"/></linearGradient></defs>
          <path d="M1 50L16 44 26 55 23 61H1z" fill="url(#sleeve)"/><path d="M63 50L48 44 38 55 41 61H63z" fill="url(#sleeve)"/>
          <path d="M31.500 4Q31.500 1 29 1T26 4L22 27 20 38 14 45Q19 54 25 55 32 51 31.500 46z" fill="url(#hand)"/>
          <path d="M32.500 4Q32.500 1 35 1T38 4L42 27 44 38 50 45Q45 54 39 55 32 51 32.500 46z" fill="url(#hand)"/>
          <path d="M32 4V50" stroke="#b06a10" stroke-width="1.500"/>
        </svg></p>
      <span class="meta"><time>3:51&#8239;PM</time><svg class="ticks" role="img" aria-label="Read"><use href="#ticks"/></svg></span>
    </li>
  </ol>
  <button class="jump" type="button" aria-label="Scroll to latest">
    <svg width="40" height="26" viewBox="0 0 40 26" aria-hidden="true"><path d="M4 4l16 17L36 4" fill="none" stroke="#fafafa" stroke-width="7" stroke-linecap="round" stroke-linejoin="round"/></svg>
  </button>
</main>

<footer class="composer">
  <button class="icon" type="button" aria-label="Attach">
    <svg width="62" height="62" viewBox="0 0 62 62" aria-hidden="true"><path d="M31 3v56M3 31h56" stroke="#fafafa" stroke-width="6" stroke-linecap="round"/></svg>
  </button>
  <div class="field">
    <input type="text" aria-label="Message">
    <button class="icon" type="button" aria-label="Stickers">
      <svg width="58" height="58" viewBox="0 0 58 58" aria-hidden="true" fill="none" stroke="#fafafa" stroke-width="4.500" stroke-linejoin="round"><path d="M22 3h14Q55 4 55 24V30C54 38 38 54 28 55H22Q3 54 3 36V22Q4 4 22 3z"/><path d="M54 31L45 32Q34 33 33 43L32 54"/></svg>
    </button>
  </div>
  <button class="icon" type="button" aria-label="Camera">
    <svg width="72" height="58" viewBox="0 0 72 58" aria-hidden="true" fill="none" stroke="#fafafa" stroke-width="5" stroke-linejoin="round"><path d="M8 10h11q3 0 5-3l2-2q2-2 5-2h10q3 0 5 2l2 2q2 3 5 3h11q5 0 5 5v34q0 5-5 5H8q-5 0-5-5V15q0-5 5-5z"/><circle cx="36" cy="32" r="14"/><circle cx="57" cy="21" r="4" fill="#fafafa" stroke="none"/></svg>
  </button>
  <button class="icon" type="button" aria-label="Record voice message">
    <svg width="50" height="72" viewBox="0 0 50 72" aria-hidden="true" fill="none" stroke="#fafafa" stroke-width="5" stroke-linecap="round"><rect x="14" y="3" width="22" height="45" rx="11"/><path d="M3 37Q5 58 25 59.500Q45 58 47 37M25 60v9"/></svg>
  </button>
</footer>
</body>
</html>
```
FILE: styles.css
```css
* { box-sizing: border-box; }

body {
  margin: 0;
  height: 100vh;
  display: flex;
  flex-direction: column;
  background: #0a0a0a;
  color: #fafafa;
  font-family: Inter, "Noto Sans", "Noto Sans Devanagari", "Liberation Sans", sans-serif;
  font-size: 50px;
  overflow: hidden;
}

h1, p, ol, ul, blockquote { margin: 0; padding: 0; font-weight: inherit; }
ol, ul { list-style: none; }
.defs { position: absolute; width: 0; height: 0; }
svg { flex: none; }

button {
  margin: 0;
  padding: 0;
  border: 0;
  background: none;
  color: inherit;
  font: inherit;
  display: flex;
  align-items: center;
}

/* Header */
.top {
  flex: none;
  padding-bottom: 13px;
  background: linear-gradient(90deg, #0f0f0f 0, #121816 36%, #131917 65%, #101413 100%);
}
.status {
  height: 152px;
  padding: 4px 78px 0 133px;
  display: flex;
  align-items: center;
  justify-content: space-between;
}
.clock { font-weight: 700; font-size: 52px; }
.status-right { display: flex; align-items: center; gap: 16px; }
.signal { width: 58px; height: 42px; }
.network { font-size: 37px; font-weight: 700; }
.battery {
  position: relative;
  width: 75px;
  height: 41px;
  margin-right: 7px;
}
.battery-level {
  display: block;
  height: 41px;
  padding-right: 4px;
  border-radius: 14px;
  background: linear-gradient(90deg, #ffd60a 16px, #8a8d8c 16px);
  color: #000;
  font-size: 35px;
  font-weight: 800;
  line-height: 41px;
  text-align: center;
}
.battery::after {
  content: "";
  position: absolute;
  left: 78px;
  top: 14px;
  width: 4px;
  height: 13px;
  border-radius: 0 6px 6px 0;
  background: #6d706f;
}
.bar {
  height: 108px;
  padding: 0 81px 0 28px;
  display: flex;
  align-items: center;
}
.back { gap: 32px; font-size: 52px; }
.avatar {
  flex: none;
  width: 108px;
  height: 108px;
  margin: 0 31px 0 52px;
  border: 2px solid #1f3d3e;
  border-radius: 50%;
  background: #0a2c2f;
  display: flex;
  align-items: center;
  justify-content: center;
}
.name { flex: 1; font-size: 49px; font-weight: 800; white-space: nowrap; }
.bar .icon { margin-bottom: 4px; }
.bar .icon + .icon { margin-left: 67px; }

/* Conversation */
.chat {
  position: relative;
  flex: 1;
  min-height: 0;
  overflow: hidden;
}
.wallpaper {
  position: absolute;
  inset: 0;
  width: 100%;
  height: 100%;
  fill: none;
  stroke: #212222;
  stroke-width: 3px;
  stroke-linejoin: round;
  stroke-linecap: round;
}
.wallpaper * { vector-effect: non-scaling-stroke; }
.wallpaper .fill { fill: #212222; stroke: none; }
.wa .s { rx: 14px; ry: 11px; }
.wa .l { rx: 22px; ry: 17px; }
.wb .s { rx: 19px; ry: 15px; }
.wb .l { rx: 30px; ry: 24px; }
.wc .s { rx: 13px; ry: 18px; }
.wc .l { rx: 20px; ry: 28px; }
.wd .s, .we .s { rx: 9px; ry: 20px; }
.wd .l, .we .l { rx: 13px; ry: 31px; }
.wf .s { rx: 19px; ry: 19px; }
.wf .l { rx: 30px; ry: 30px; }

.messages {
  position: relative;
  height: 100%;
  padding: 0 50px 6px;
  display: flex;
  flex-direction: column;
  justify-content: flex-end;
  gap: 14px;
}
.bubble {
  position: relative;
  flex: none;
  max-width: 78%;
  padding: 14px 26px 14px 29px;
  border-radius: 38px;
  display: flex;
  align-items: flex-end;
  gap: 40px;
}
.out { align-self: flex-end; background: #144d37; color: #fafafa; }
.in { align-self: flex-start; background: #242626; padding-right: 30px; }
.last { margin-bottom: 26px; }

.text { line-height: 66px; font-weight: 500; margin-bottom: 7px; }
.meta {
  flex: none;
  margin-left: auto;
  display: flex;
  align-items: center;
  gap: 8px;
  font-size: 36px;
  line-height: 44px;
  font-weight: 500;
  font-variant-numeric: tabular-nums;
  color: #a0b8ae;
}
.in .meta { color: #a1a2a2; }
.ticks { width: 48px; height: 32px; }

.continued {
  flex-direction: column;
  align-items: stretch;
  gap: 0;
  border-radius: 0 0 38px 38px;
}
.continued .meta { margin-top: 5px; }
.tips li { position: relative; padding-left: 53px; line-height: 78px; }
.tips .latin { line-height: 66px; }
.tips li::before {
  content: "";
  position: absolute;
  left: 12px;
  top: 35px;
  width: 16px;
  height: 16px;
  border-radius: 50%;
  background: #fafafa;
}
.tips .latin::before { top: 29px; }

.quoted { display: block; padding: 10px 10px 14px; }
.quote {
  padding: 22px 29px 34px 40px;
  border-radius: 28px;
  background: linear-gradient(90deg, #fc9775 12px, #123c2c 12px);
  font-size: 39px;
  line-height: 54px;
  font-weight: 500;
  color: #c5d0cb;
}
.in .quote {
  background: linear-gradient(90deg, #fc9775 12px, #1d1f1e 12px);
  color: #cacbcb;
}
.quote b { display: block; font-size: 44px; line-height: 70px; font-weight: 700; color: #fc9775; }
.after-blank { margin-top: 54px; }
.line { display: flex; align-items: flex-end; gap: 40px; padding: 13px 16px 0 19px; }
.in .line { padding-right: 20px; }

.long { max-width: 76%; display: block; padding-bottom: 21px; }
.long .text { margin: 0; }
.long .meta { width: max-content; margin-top: -37px; margin-bottom: -7px; }

.tail { position: absolute; right: -18px; bottom: 0; width: 36px; height: 44px; color: #144d37; }
.in .tail { right: auto; left: -18px; color: #242626; transform: scaleX(-1); }

.emoji { width: 60px; height: 60px; vertical-align: -11px; }
.clapper { height: 62px; }
.hands { width: 64px; height: 62px; margin-left: 7px; }

.jump {
  position: absolute;
  right: 27px;
  bottom: 72px;
  width: 96px;
  height: 96px;
  border-radius: 50%;
  background: #242626;
  justify-content: center;
}

/* Composer */
.composer {
  flex: none;
  height: 244px;
  padding: 27px 50px 0 40px;
  display: flex;
  align-items: flex-start;
  background: linear-gradient(90deg, #0f0f0f 0, #101110 38%, #111614 70%, #101312 100%);
}
.composer > .icon { height: 88px; }
.field {
  flex: 1;
  min-width: 0;
  height: 91px;
  margin: 0 54px 0 39px;
  padding: 0 33px 0 45px;
  border: 2px solid #383b3a;
  border-radius: 46px;
  background: linear-gradient(90deg, #272727 40%, #2b2f2e 100%);
  display: flex;
  align-items: center;
}
.field input {
  flex: 1;
  width: 0;
  min-width: 0;
  height: 100%;
  padding: 0;
  border: 0;
  outline: 0;
  background: none;
  color: inherit;
  font: inherit;
}
.composer > .icon:last-child { margin-left: 55px; }
```
